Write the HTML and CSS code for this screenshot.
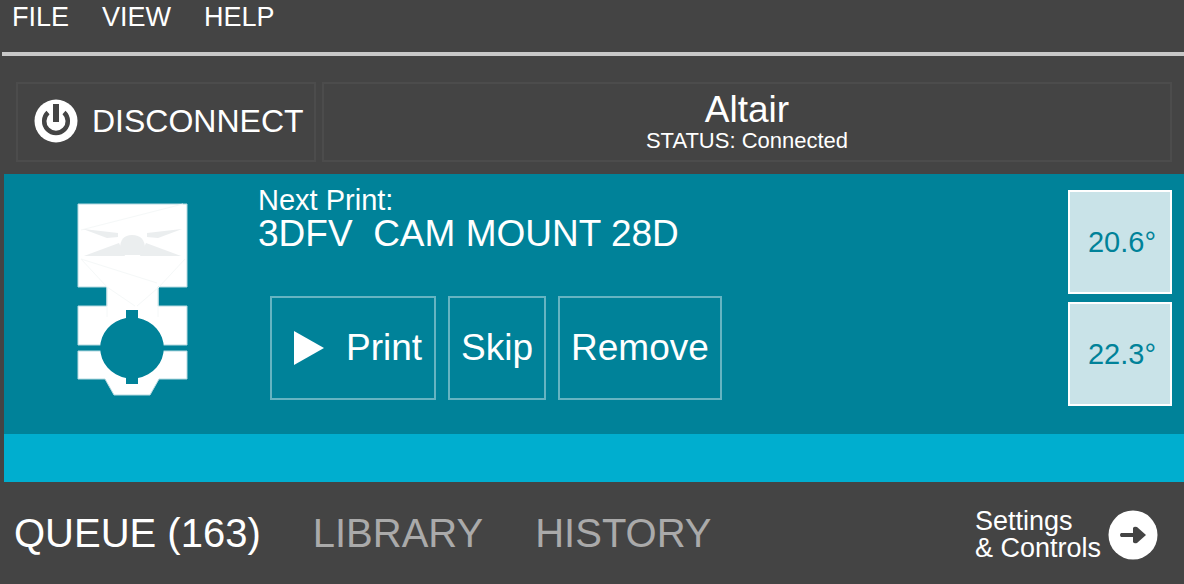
FILE: index.html
```html
<!DOCTYPE html>
<html lang="en">
<head>
  <meta charset="UTF-8">
  <meta name="viewport" content="width=device-width, initial-scale=1.0">
  <title>Printer</title>
  <link rel="stylesheet" href="styles.css">
</head>
<body>
  <nav class="menu-bar">
    <button>FILE</button>
    <button>VIEW</button>
    <button>HELP</button>
  </nav>

  <div class="connection">
    <button class="disconnect">
      <svg width="44" height="44" viewBox="0 0 44 44">
        <circle cx="22" cy="22" r="21.5" fill="#fff"/>
        <path d="M14 13.5A11.8 11.8 0 1 0 30 13.5" fill="none" stroke="#444" stroke-width="4.5"/>
        <path d="M22 5V23" stroke="#444" stroke-width="6"/>
      </svg>
      DISCONNECT
    </button>
    <button class="printer">
      <span class="printer-name">Altair</span>
      <span class="printer-status">STATUS: Connected</span>
    </button>
  </div>

  <main class="next-print">
    <svg class="part" width="112" height="196" viewBox="0 0 112 196">
      <path class="part-body" d="M1 1H110V84H81V103H110V142H82V148H110V176H82L73 192H37L28 176H1V148H29V142H1V103H30V84H1Z"/>
      <g class="part-lines">
        <path d="M4 27L106 1M4 56L30 84L58 103M108 56L82 84L60 103M4 56L80 80M30 84V114M81 84V114"/>
      </g>
      <g class="part-shade">
        <path d="M6 26L41 30V34L30 35Z"/>
        <path d="M105 26L70 30V34L81 35Z"/>
        <path d="M7 53L42 40L48 53Z"/>
        <path d="M104 53L69 40L63 53Z"/>
        <path d="M43 46Q43 32 55 32Q68 32 68 46L64 52H47Z"/>
        <circle cx="51" cy="41" r="4"/>
        <circle cx="60" cy="41" r="4"/>
      </g>
      <path class="part-hole" d="M49 107H61V115A31.5 30.5 0 0 1 61 175V181H49V175A31.5 30.5 0 0 1 49 115Z"/>
    </svg>

    <div class="details">
      <div class="label">Next Print:</div>
      <div class="title">3DFV  CAM MOUNT 28D</div>
      <div class="actions">
        <button class="print">
          <svg width="30" height="34" viewBox="0 0 30 34"><path d="M0 0L30 17L0 34Z" fill="#fff"/></svg>
          Print
        </button>
        <button>Skip</button>
        <button>Remove</button>
      </div>
    </div>

    <div class="temps">
      <button>20.6°</button>
      <button>22.3°</button>
    </div>
  </main>
  <div class="message-bar"></div>

  <footer class="tab-bar">
    <div class="tabs">
      <button class="active">QUEUE (163)</button>
      <button>LIBRARY</button>
      <button>HISTORY</button>
    </div>
    <button class="settings">
      <span>Settings<br>&amp; Controls</span>
      <svg width="50" height="50" viewBox="0 0 50 50">
        <circle cx="25" cy="25" r="24.5" fill="#fff"/>
        <path d="M13 23H25V18Q26 16 29 17L38 25L29 33Q26 34 25 32V27H13Q11 25 13 23Z" fill="#444"/>
      </svg>
    </button>
  </footer>
</body>
</html>
```

FILE: styles.css
```css
* {
  box-sizing: border-box;
}
body {
  margin: 0;
  background: #444;
  color: #fff;
  font-family: "Liberation Sans", Arial, sans-serif;
}
button {
  margin: 0;
  padding: 0;
  border: none;
  background: none;
  color: inherit;
  font-family: inherit;
  cursor: pointer;
}
svg {
  display: block;
  flex: none;
}

/* menu */
.menu-bar {
  display: flex;
  gap: 33px;
  height: 56px;
  margin-left: 2px;
  padding-left: 10px;
  border-bottom: 4px solid #c8c8c8;
}
.menu-bar button {
  height: 34px;
  font-size: 27px;
  line-height: 34px;
}

/* connection */
.connection {
  display: flex;
  gap: 6px;
  padding: 26px 12px 12px 16px;
}
.connection button {
  height: 80px;
  border: 2px solid #4c4c4c;
}
.disconnect {
  display: flex;
  align-items: center;
  gap: 14px;
  width: 300px;
  padding: 0 0 2px 16px;
  font-size: 32px;
}
.printer {
  flex: 1;
}
.printer span {
  display: block;
}
.printer-name {
  font-size: 37px;
  line-height: 38px;
}
.printer-status {
  font-size: 22px;
  line-height: 24px;
}

/* next print */
.next-print {
  display: flex;
  height: 260px;
  margin-left: 4px;
  padding: 12px 12px 0 73px;
  background: #008299;
}
.part {
  margin-top: 17px;
}
.part-body {
  fill: #fff;
  stroke: #b5dae1;
}
.part-lines {
  fill: none;
  stroke: #f5f8f8;
}
.part-shade {
  fill: #e3e7e9;
  opacity: 0.7;
}
.part-hole {
  fill: #008299;
}
.details {
  flex: 1;
  margin-left: 69px;
}
.label {
  font-size: 29px;
  line-height: 28px;
}
.title {
  font-size: 37px;
  line-height: 40px;
  white-space: pre;
}
.actions {
  display: flex;
  gap: 12px;
  margin: 42px 0 0 12px;
}
.actions button {
  height: 104px;
  padding: 0 11px;
  border: 2px solid #66b4c2;
  font-size: 37px;
}
.actions .print {
  display: flex;
  align-items: center;
  gap: 22px;
  padding: 0 12px 0 22px;
}
.temps {
  display: flex;
  flex-direction: column;
  gap: 8px;
  margin-top: 4px;
}
.temps button {
  width: 104px;
  height: 104px;
  padding-left: 4px;
  border: 2px solid #fff;
  background: #c9e3e8;
  color: #008299;
  font-size: 29px;
}
.message-bar {
  height: 48px;
  margin-left: 4px;
  background: #00aecf;
}

/* tabs */
.tab-bar {
  display: flex;
  justify-content: space-between;
  align-items: center;
  height: 102px;
  padding: 0 26px 0 14px;
}
.tabs {
  display: flex;
  gap: 52px;
}
.tabs button {
  color: #aaa;
  font-size: 40px;
}
.tabs .active {
  color: #fff;
}
.settings {
  display: flex;
  align-items: center;
  gap: 7px;
  margin-top: 4px;
  font-size: 27px;
  line-height: 27px;
  text-align: left;
}
```
